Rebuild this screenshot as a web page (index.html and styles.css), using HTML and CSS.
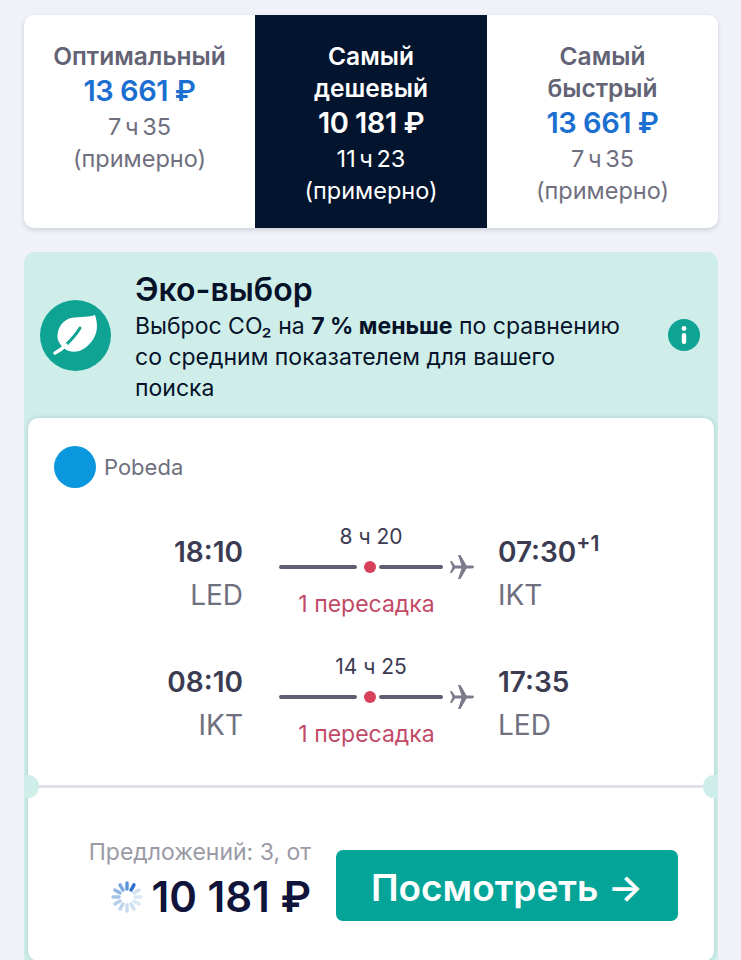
FILE: index.html
```html
<!DOCTYPE html>
<html lang="en">
<head>
    <meta charset="UTF-8">
    <meta name="viewport" content="width=device-width, initial-scale=1.0">
    <title>Flights</title>
    <link rel="stylesheet" href="styles.css">
</head>
<body>
    <div class="tabs">
        <div class="tab">
            <div class="tab-title">Оптимальный</div>
            <div class="tab-price">13 661 ₽</div>
            <div class="tab-note">7 ч 35<br>(примерно)</div>
        </div>
        <div class="tab tab-active">
            <div class="tab-title">Самый<br>дешевый</div>
            <div class="tab-price">10 181 ₽</div>
            <div class="tab-note">11 ч 23<br>(примерно)</div>
        </div>
        <div class="tab">
            <div class="tab-title">Самый<br>быстрый</div>
            <div class="tab-price">13 661 ₽</div>
            <div class="tab-note">7 ч 35<br>(примерно)</div>
        </div>
    </div>

    <div class="eco">
        <div class="eco-head">
            <svg class="eco-icon" viewBox="0 0 71 71">
                <circle cx="35.5" cy="35.5" r="35.5" fill="#0fa394"/>
                <path d="M55 15 C58 24 58 33 52 41 C47 48 38 54 29 51 C24 49 20 45 18 40 C16 32 20 23 28 19 C36 16 46 18 55 15 Z" fill="#fff"/>
                <path d="M26 45 C31 40 36 35 40 28" fill="none" stroke="#0fa394" stroke-width="3" stroke-linecap="round"/>
                <path d="M15 53 C19 51 23 48 26 45" fill="none" stroke="#fff" stroke-width="3.5" stroke-linecap="round"/>
            </svg>
            <div class="eco-text">
                <div class="eco-title">Эко-выбор</div>
                <div class="eco-desc">Выброс CO₂ на <b>7 % меньше</b> по сравнению со средним показателем для вашего поиска</div>
            </div>
            <svg class="info-icon" viewBox="0 0 32 32">
                <circle cx="16" cy="16" r="16" fill="#0fa394"/>
                <circle cx="16" cy="9.5" r="2.4" fill="#fff"/>
                <rect x="13.8" y="14" width="4.4" height="11" rx="2" fill="#fff"/>
            </svg>
        </div>

        <div class="ticket">
            <div class="ticket-top">
                <div class="airline">
                    <span class="airline-logo"></span>
                    <span class="airline-name">Pobeda</span>
                </div>

                <div class="leg">
                    <div class="leg-from">
                        <div class="leg-time">18:10</div>
                        <div class="leg-code">LED</div>
                    </div>
                    <div class="leg-mid">
                        <div class="leg-duration">8 ч 20</div>
                        <div class="leg-route">
                            <span class="leg-line"></span>
                            <span class="leg-dot"></span>
                            <span class="leg-line leg-line-short"></span>
                            <svg class="plane" viewBox="0 0 24 24"><path d="M0 6 L1.8 6 L5 10.6 L11.5 10.6 L8 0 L10.5 0 L16.5 10.6 L22 10.6 Q24 10.6 24 12 Q24 13.4 22 13.4 L16.5 13.4 L10.5 24 L8 24 L11.5 13.4 L5 13.4 L1.8 18 L0 18 L2.5 12 Z" fill="#7b7b8b"/></svg>
                        </div>
                        <div class="leg-stops">1 пересадка</div>
                    </div>
                    <div class="leg-to">
                        <div class="leg-time">07:30<sup>+1</sup></div>
                        <div class="leg-code">IKT</div>
                    </div>
                </div>

                <div class="leg">
                    <div class="leg-from">
                        <div class="leg-time">08:10</div>
                        <div class="leg-code">IKT</div>
                    </div>
                    <div class="leg-mid">
                        <div class="leg-duration">14 ч 25</div>
                        <div class="leg-route">
                            <span class="leg-line"></span>
                            <span class="leg-dot"></span>
                            <span class="leg-line leg-line-short"></span>
                            <svg class="plane" viewBox="0 0 24 24"><path d="M0 6 L1.8 6 L5 10.6 L11.5 10.6 L8 0 L10.5 0 L16.5 10.6 L22 10.6 Q24 10.6 24 12 Q24 13.4 22 13.4 L16.5 13.4 L10.5 24 L8 24 L11.5 13.4 L5 13.4 L1.8 18 L0 18 L2.5 12 Z" fill="#7b7b8b"/></svg>
                        </div>
                        <div class="leg-stops">1 пересадка</div>
                    </div>
                    <div class="leg-to">
                        <div class="leg-time">17:35</div>
                        <div class="leg-code">LED</div>
                    </div>
                </div>
            </div>

            <div class="ticket-divider">
                <span class="notch notch-left"></span>
                <span class="notch notch-right"></span>
            </div>

            <div class="ticket-bottom">
                <div class="offer">
                    <div class="offer-label">Предложений: 3, от</div>
                    <div class="offer-price">
                        <svg class="spinner" viewBox="0 0 32 32" stroke-width="3.4" stroke-linecap="round">
                            <line x1="16" y1="2" x2="16" y2="8" stroke="#5b93d8"/>
                            <line x1="16" y1="2" x2="16" y2="8" stroke="#2a6fc9" transform="rotate(30 16 16)"/>
                            <line x1="16" y1="2" x2="16" y2="8" stroke="#cfe0f3" transform="rotate(60 16 16)"/>
                            <line x1="16" y1="2" x2="16" y2="8" stroke="#dbe7f5" transform="rotate(90 16 16)"/>
                            <line x1="16" y1="2" x2="16" y2="8" stroke="#dbe7f5" transform="rotate(120 16 16)"/>
                            <line x1="16" y1="2" x2="16" y2="8" stroke="#cfe0f3" transform="rotate(150 16 16)"/>
                            <line x1="16" y1="2" x2="16" y2="8" stroke="#c6daf1" transform="rotate(180 16 16)"/>
                            <line x1="16" y1="2" x2="16" y2="8" stroke="#bdd4ee" transform="rotate(210 16 16)"/>
                            <line x1="16" y1="2" x2="16" y2="8" stroke="#b3cdeb" transform="rotate(240 16 16)"/>
                            <line x1="16" y1="2" x2="16" y2="8" stroke="#a5c4e7" transform="rotate(270 16 16)"/>
                            <line x1="16" y1="2" x2="16" y2="8" stroke="#93b8e3" transform="rotate(300 16 16)"/>
                            <line x1="16" y1="2" x2="16" y2="8" stroke="#7aa8de" transform="rotate(330 16 16)"/>
                        </svg>
                        <span>10 181 ₽</span>
                    </div>
                </div>
                <div class="view-btn">Посмотреть →</div>
            </div>
        </div>
    </div>
</body>
</html>
```

FILE: styles.css
```css
html, body {
    height: 960px;
    overflow: hidden;
}
body {
    font-family: Inter, "Noto Sans", sans-serif;
    margin: 0;
    padding: 15px 23px 0 24px;
    box-sizing: border-box;
    background-color: #f0f2f8;
    color: #061229;
}

.tabs {
    display: grid;
    grid-template-columns: 231px 232px 231px;
    height: 213px;
    background-color: #fff;
    border-radius: 10px;
    overflow: hidden;
    box-shadow: 0 2px 5px rgba(40, 50, 80, 0.18);
}
.tab {
    padding-top: 25px;
    text-align: center;
}
.tab-active {
    background-color: #03142e;
    color: #fff;
}
.tab-title {
    font-size: 24.5px;
    line-height: 32px;
    font-weight: 600;
    color: #636375;
}
.tab-price {
    font-size: 29px;
    line-height: 38px;
    font-weight: 600;
    letter-spacing: -0.5px;
    color: #1b6fd0;
}
.tab-note {
    margin-top: 1px;
    font-size: 23.5px;
    line-height: 32px;
    word-spacing: -3px;
    color: #6f6f7f;
}
.tab-active .tab-title,
.tab-active .tab-price,
.tab-active .tab-note {
    color: #fff;
}

.eco {
    margin-top: 24px;
    height: 720px;
    padding: 0 4px;
    background-color: #cfeeea;
    border-radius: 10px 10px 0 0;
    overflow: hidden;
}
.eco-head {
    display: flex;
    align-items: center;
    height: 166px;
}
.eco-icon {
    width: 71px;
    height: 71px;
    margin-left: 12px;
    flex-shrink: 0;
}
.eco-text {
    width: 500px;
    margin-left: 24px;
    margin-top: 3px;
    flex-shrink: 0;
}
.eco-title {
    margin-bottom: 2px;
    font-size: 32px;
    line-height: 39px;
    font-weight: 600;
}
.eco-desc {
    font-size: 23px;
    line-height: 31px;
}
.info-icon {
    width: 32px;
    height: 32px;
    margin-left: 33px;
    flex-shrink: 0;
}

.ticket {
    background-color: #fff;
    border-radius: 10px;
    box-shadow: 0 0 4px rgba(40, 90, 100, 0.25);
    height: 543px;
}
.ticket-top {
    height: 367px;
    padding-top: 28px;
    box-sizing: border-box;
}
.airline {
    display: flex;
    align-items: center;
    margin-left: 26px;
    height: 42px;
}
.airline-logo {
    width: 42px;
    height: 42px;
    border-radius: 50%;
    background-color: #0b97dd;
}
.airline-name {
    margin-left: 8px;
    font-size: 22px;
    color: #6f6f7f;
}

.leg {
    display: flex;
    margin-top: 27px;
    height: 103px;
}
.leg-from,
.leg-to {
    padding-top: 17px;
}
.leg-from {
    width: 215px;
    text-align: right;
}
.leg-time {
    font-size: 28px;
    line-height: 40px;
    font-weight: 600;
    color: #3b3b52;
}
.leg-time sup {
    font-size: 21px;
    line-height: 0;
    vertical-align: 11px;
}
.leg-code {
    font-size: 28px;
    line-height: 46px;
    color: #6f6f80;
}
.leg-mid {
    width: 219px;
    margin-left: 36px;
    padding-top: 7px;
}
.leg-duration {
    width: 184px;
    font-size: 21px;
    line-height: 30px;
    text-align: center;
    color: #3b3b52;
}
.leg-route {
    display: flex;
    align-items: center;
    height: 24px;
    margin-top: 3px;
}
.leg-line {
    width: 78px;
    height: 4px;
    border-radius: 2px;
    background-color: #5f5f73;
}
.leg-line-short {
    width: 64px;
}
.leg-dot {
    width: 12px;
    height: 12px;
    margin: 0 3px 0 7px;
    border-radius: 50%;
    background-color: #d8415a;
}
.plane {
    width: 24px;
    height: 24px;
    margin-left: 7px;
}
.leg-stops {
    width: 175px;
    margin-top: 12px;
    font-size: 23px;
    line-height: 26px;
    text-align: center;
    color: #c24a66;
}

.ticket-divider {
    position: relative;
    height: 3px;
    background-color: #dfe0e8;
}
.notch {
    position: absolute;
    top: -10px;
    width: 22px;
    height: 23px;
    border-radius: 50%;
    background-color: #cfeeea;
}
.notch-left {
    left: -11px;
}
.notch-right {
    right: -11px;
}

.ticket-bottom {
    display: flex;
    padding-top: 50px;
}
.offer {
    width: 283px;
    text-align: right;
}
.offer-label {
    font-size: 23px;
    line-height: 28px;
    color: #9a9aa6;
}
.offer-price {
    display: flex;
    align-items: center;
    justify-content: flex-end;
    gap: 8px;
    margin-top: 1px;
    font-size: 42px;
    line-height: 60px;
    font-weight: 600;
    color: #10133a;
}
.spinner {
    width: 32px;
    height: 32px;
}
.view-btn {
    width: 342px;
    height: 71px;
    margin-left: 25px;
    margin-top: 12px;
    border-radius: 7px;
    background-color: #04a598;
    color: #fff;
    font-size: 37px;
    font-weight: 600;
    line-height: 76px;
    text-align: center;
}
```
